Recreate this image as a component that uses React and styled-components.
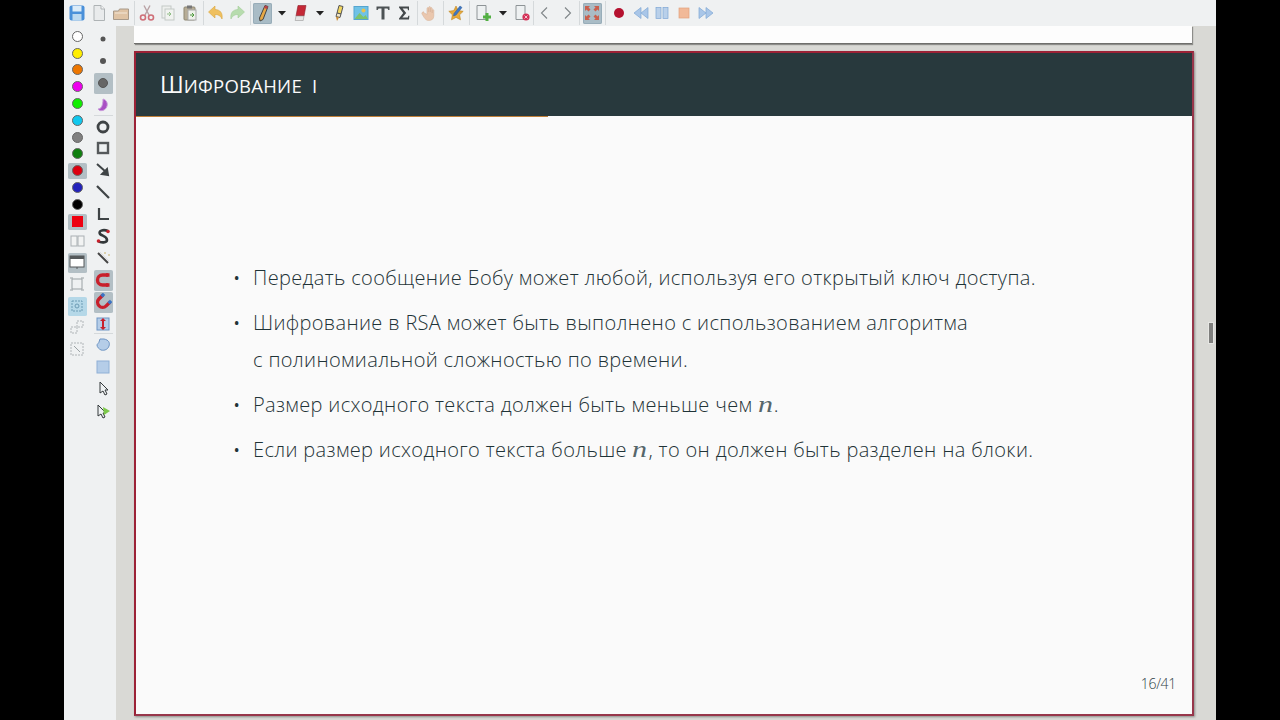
import React from 'react'
import styled, { createGlobalStyle } from 'styled-components'

const Global = createGlobalStyle`
  html, body { margin: 0; padding: 0; background: #000; }
  body { font-family: "Open Sans", "Noto Sans", sans-serif; }
`

const Screen = styled.div`
  width: 1280px;
  height: 720px;
  padding: 0 64px;
  box-sizing: border-box;
  background: #000;
  overflow: hidden;
`
const AppWindow = styled.div`
  height: 100%;
  display: flex;
  flex-direction: column;
  background: #eff1f2;
`
const Toolbar = styled.div`
  height: 26px;
  flex: none;
  display: flex;
  align-items: center;
  padding-left: 2.6px;
`
const ToolBtn = styled.div`
  width: ${p => p.$w || 21.7}px;
  height: 22px;
  flex: none;
  display: flex;
  align-items: center;
  justify-content: center;
  & > span {
    display: flex;
    align-items: center;
    justify-content: center;
    width: 19px;
    height: 21px;
    border-radius: 2px;
    background: ${p => (p.$on ? '#a9bcc6' : 'transparent')};
    box-shadow: ${p => (p.$on ? 'inset 0 0 0 1px #98adb9' : 'none')};
  }
`
const Sep = styled.div`
  width: ${p => p.$w || 4}px;
  height: 24px;
  flex: none;
  position: relative;
  &::after {
    content: '';
    position: absolute;
    left: 50%;
    top: 0;
    bottom: 0;
    width: 1px;
    background: #d5d9db;
  }
`
const Body = styled.div`
  flex: 1;
  min-height: 0;
  display: flex;
`
const Sidebar = styled.div`
  width: 52px;
  flex: none;
  display: flex;
`
const SideCol = styled.div`
  width: 26px;
  display: flex;
  flex-direction: column;
  align-items: center;
  padding-top: ${p => p.$top}px;
`
const Slot = styled.div`
  width: 19px;
  height: ${p => p.$h}px;
  flex: none;
  display: flex;
  align-items: center;
  justify-content: center;
  position: relative;
  box-sizing: border-box;
  padding: ${p => (p.$on ? '0.5px 0' : '0')};
  background-clip: content-box;
  border-radius: 2px;
  background-color: ${p => (p.$on === 'blue' ? '#b5d8e8' : p.$on ? '#b3bfc5' : 'transparent')};
  ${p => p.$rule && `
    &::after {
      content: '';
      position: absolute;
      left: 0;
      right: 0;
      bottom: 0;
      height: 1px;
      background: #d5d9db;
    }
  `}
`
const Dot = styled.span`
  width: 9px;
  height: 9px;
  border-radius: 50%;
  background: ${p => p.$c};
  border: 1px solid ${p => p.$b || '#666'};
`
const Workspace = styled.div`
  flex: 1;
  min-width: 0;
  background: #d9d9d5;
  display: flex;
  position: relative;
`
const Pages = styled.div`
  width: 1060px;
  margin-left: 18px;
  display: flex;
  flex-direction: column;
`
const PrevPage = styled.div`
  height: 17px;
  width: 1058px;
  flex: none;
  background: #fdfdfd;
  border-bottom: 1px solid #6f6f6c;
  box-shadow: 1px 1px 1px #8d8d8a;
`
const Slide = styled.div`
  margin-top: 7px;
  width: 1060px;
  height: 665px;
  flex: none;
  box-sizing: border-box;
  border: 2px solid #9c2236;
  border-right-color: #97364a;
  border-bottom-color: #97364a;
  box-shadow: 1px 1px 2px #8d8d8a;
  background: #fafafa;
  display: flex;
  flex-direction: column;
  color: #1f3337;
`
const SlideHead = styled.div`
  height: 63px;
  flex: none;
  background: #28393d;
  display: flex;
  align-items: baseline;
  padding: 18px 0 0 24px;
  box-sizing: border-box;
  color: #fafafa;
  font-size: 23px;
  line-height: 26px;
  font-weight: 400;
  white-space: pre;
`
const SmallCaps = styled.span`
  font-size: 18.5px;
  letter-spacing: 0.25px;
`
const Progress = styled.div`
  height: 1px;
  flex: none;
  background: #fafafa;
  & > div {
    height: 100%;
    background: #c07f38;
  }
`
const SlideBody = styled.div`
  flex: 1;
  display: flex;
  flex-direction: column;
  padding: 143px 0 0 98px;
  position: relative;
`
const Item = styled.div`
  display: flex;
  font-size: 20px;
  font-weight: 300;
  line-height: 36.5px;
  letter-spacing: 0.34px;
  margin-bottom: 8.7px;
  white-space: nowrap;
`
const Bullet = styled.span`
  width: 19px;
  flex: none;
  font-size: 14px;
  font-weight: 600;
`
const MathN = styled.i`
  display: inline-block;
  width: 16px;
  line-height: 0;
  font-family: "Liberation Serif", serif;
  font-size: 24px;
  font-weight: 400;
  letter-spacing: 0;
  color: #56666a;
  transform: scaleX(1.25);
  transform-origin: left center;
`
const PageNo = styled.div`
  position: absolute;
  right: 16px;
  bottom: 21px;
  font-size: 14px;
  font-weight: 300;
  color: #2f4246;
  letter-spacing: -0.3px;
`
const ScrollHandle = styled.div`
  position: absolute;
  left: 1093px;
  top: 297px;
  width: 4px;
  height: 20px;
  background: #7f7f7d;
  box-shadow: 0 0 0 1px #e6e6e3;
`

const Ico = ({ children, s = 18 }) => (
  <svg width={s} height={s} viewBox="0 0 18 18">{children}</svg>
)

const toolbarIcons = {
  save: <><rect x="1.500" y="1.500" width="15" height="15" rx="2" fill="#4a90d9" /><rect x="4.500" y="2" width="9" height="5.500" fill="#dcecf8" /><rect x="4.500" y="10" width="9" height="6.500" fill="#bcd9f0" /></>,
  file: <><path d="M4 1.500h7l3.500 3.500v11.500H4z" fill="#e9ebec" stroke="#aeb3b5" /><path d="M11 1.500V5h3.500" fill="#f6f7f7" stroke="#aeb3b5" /></>,
  open: <><path d="M1.500 7h5l1-2h9v10.500h-15z" fill="#dfc3a4" stroke="#a89a8a" /><path d="M3 9h12" stroke="#f3e7d8" /></>,
  cut: <><path d="M6 1.500l5 9.500M12 1.500L7 11" stroke="#b9a2a5" strokeWidth="1.400" /><circle cx="5" cy="13.500" r="2.500" fill="none" stroke="#cf6f78" strokeWidth="1.600" /><circle cx="13" cy="13.500" r="2.500" fill="none" stroke="#cf6f78" strokeWidth="1.600" /></>,
  copy: <><rect x="3" y="2" width="9" height="12" fill="#eef0ee" stroke="#c4c9c6" /><rect x="6" y="5" width="9" height="11" fill="#f1f3f0" stroke="#c4c9c6" /><path d="M8 10h4M10 8l2 2-2 2" stroke="#8fbd85" fill="none" /></>,
  paste: <><rect x="3" y="3" width="11" height="13" rx="1" fill="#b7ad96" stroke="#8f8873" /><rect x="6" y="1.500" width="5" height="3" fill="#777" /><rect x="7" y="6" width="8" height="10" fill="#eef0ea" stroke="#aaa" /><path d="M9 11h4M11 9l2 2-2 2" stroke="#4e9a3e" fill="none" /></>,
  undo: <path d="M8 2L1.500 8 8 14v-3.500c3 0 5.500 1 7 4.500 1-6-2-9.500-7-9.500z" fill="#efc05f" stroke="#d9a53d" strokeWidth=".6" />,
  redo: <path d="M10 2l6.500 6-6.500 6v-3.500c-3 0-5.500 1-7 4.500-1-6 2-9.500 7-9.500z" fill="#b7dcae" stroke="#a2cd98" strokeWidth=".6" />,
  pen: <><path d="M11 1.500l3 1L9 15.500l-3 1.500-.5-3z" fill="#e6a845" stroke="#444" /><path d="M11 1.500l3 1-1 2.500-3-1z" fill="#b8434b" /></>,
  eraser: <><path d="M6 1.500h8l-2 10.500H4z" fill="#c42836" stroke="#8f1e2a" strokeWidth=".6" /><path d="M4 12h8l-.8 4.500H3.200z" fill="#e5e5e5" stroke="#999" strokeWidth=".6" /></>,
  marker: <><path d="M9 1.500l4 1-2 7.500-4-1z" fill="#f3d75f" stroke="#555" /><path d="M7 9l4 1-1 3.500-4-1z" fill="#f1e6c6" stroke="#555" /><path d="M6 12.500l3 1L7 17z" fill="#c8892d" /></>,
  image: <><rect x="2" y="2.500" width="14" height="13" fill="#6fc2e6" stroke="#55a5cf" /><path d="M2.500 15l5-6 4 4 2-2 2.500 4z" fill="#7dc36d" /><circle cx="11.500" cy="6.500" r="2" fill="#e9c24f" /></>,
  text: <path d="M2.500 2.500h13v3.500h-1.200L13.500 4.500h-3v11h-3v-11h-3L3.700 6H2.500z" fill="#4c5254" />,
  sigma: <path d="M4 2.500h10v3.800h-1L12.600 4.500H7.600l3.600 4.500-3.800 4.500h5.400l.6-1.800h1L14 15.500H4v-1L8.200 9 4 3.500z" fill="#44494b" />,
  hand: <path d="M2.500 8.500l3.500 2V4.500c0-1.200 1.700-1.200 1.700 0v3.500-4.500c0-1.200 1.800-1.200 1.800 0v4.500-3.500c0-1.200 1.700-1.200 1.700 0v4.500-2.500c0-1.200 1.600-1.200 1.600 0v5.500c0 3-2.200 4.500-5 4.500-3.300 0-4.300-2.500-6.800-6.500-.6-1 .7-2.700 2-2z" fill="#eac7ae" stroke="#d9b69c" strokeWidth=".6" />,
  star: <><path d="M9 2l2.200 4.600 5 .7-3.600 3.500.9 5L9 13.400 4.500 15.800l.9-5L1.800 7.300l5-.7z" fill="#e8a93a" stroke="#b98422" strokeWidth=".6" /><path d="M13 2l2 1.500-6 7.500-2.500 1 .5-2.500z" fill="#3f78c4" stroke="#2c5996" strokeWidth=".5" /></>,
  addPage: <><path d="M3 1.500h9v14H3z" fill="#eef1f2" stroke="#8e9497" /><rect x="9" y="11.500" width="8" height="3" fill="#52b043" /><rect x="11.500" y="9" width="3" height="8" fill="#52b043" /></>,
  delPage: <><path d="M3 1.500h9v14H3z" fill="#eef1f2" stroke="#8e9497" /><circle cx="13" cy="13" r="3.600" fill="#d32f55" /><path d="M11.500 11.500l3 3M14.500 11.500l-3 3" stroke="#f3c2cf" /></>,
  prev: <path d="M11 3.500L5.500 9l5.500 5.500" fill="none" stroke="#7f8588" strokeWidth="1.100" />,
  next: <path d="M7 3.500L12.500 9 7 14.500" fill="none" stroke="#7f8588" strokeWidth="1.100" />,
  full: <g fill="#c95f4e"><path d="M2 2h5l-1.500 1.500 2 2-2 2-2-2L2 7z" /><path d="M16 2h-5l1.500 1.500-2 2 2 2 2-2L16 7z" /><path d="M2 16h5l-1.500-1.500 2-2-2-2-2 2L2 11z" /><path d="M16 16h-5l1.500-1.500-2-2 2-2 2 2L16 11z" /></g>,
  record: <circle cx="10" cy="9" r="5" fill="#b5112f" />,
  rewind: <g fill="#a9c6e8" stroke="#7ea6d4" strokeWidth=".7"><path d="M10 3.500v11L3 9z" /><path d="M17 3.500v11L10 9z" /></g>,
  pause: <g fill="#b9d0ea" stroke="#7ea6d4" strokeWidth=".7"><rect x="4" y="3.500" width="5" height="11" /><rect x="11" y="3.500" width="5" height="11" /></g>,
  stop: <rect x="5" y="4" width="10" height="10" fill="#f1b998" stroke="#e3a27d" strokeWidth=".7" />,
  forward: <g fill="#a9c6e8" stroke="#7ea6d4" strokeWidth=".7"><path d="M3 3.500v11L10 9z" /><path d="M10 3.500v11L17 9z" /></g>,
}

const Caret = () => <svg width="8" height="5" viewBox="0 0 8 5"><path d="M0 0h8L4 4.500z" fill="#222" /></svg>

const toolbar = [
  ['save'], ['file'], ['open'], 'sep',
  ['cut'], ['copy'], ['paste'], 'sep',
  ['undo'], ['redo'], 'sep',
  ['pen', { on: true }], 'caret', ['eraser'], 'caret',
  ['marker'], ['image'], ['text'], ['sigma'], 'sep',
  ['hand'], 'sep', ['star'], 'sep',
  ['addPage', { w: 24 }], 'caret', ['delPage', { w: 21 }], 'sep2',
  ['prev'], ['next'], 'sep',
  ['full', { on: true }], 'sep',
  ['record'], ['rewind'], ['pause'], ['stop'], ['forward'],
]

const colours = [
  ['#ffffff'], ['#ffee00'], ['#ee7700'], ['#ee00ee'], ['#11ee00'], ['#11c8ee'], ['#808080'], ['#108010'],
  ['#dd0010', true], ['#2222bb'], ['#000000'],
]

const mag = (rot, tip) => (
  <Ico>
    <g transform={`rotate(${rot} 9 9)`}>
      <path d="M4 4v5.500a5 5 0 0 0 10 0V4" fill="none" stroke="#c8202c" strokeWidth="3.400" />
      <path d="M4 2.500V6M14 2.500V6" stroke={tip} strokeWidth="3.400" />
    </g>
  </Ico>
)

const tools = [
  [<svg width="6" height="6"><circle cx="3" cy="3" r="2.500" fill="#555" /></svg>],
  [<svg width="8" height="8"><circle cx="4" cy="4" r="3" fill="#555" /></svg>],
  [<svg width="12" height="12"><circle cx="6" cy="6" r="4.500" fill="#666" stroke="#555" /></svg>, true],
  [<Ico><path d="M9 3c5 1 6 8 1 11-2 1-5 1-6-1 3 0 5-3 5-10z" fill="#a94fc4" stroke="#c99adb" /></Ico>, false, true],
  [<Ico><circle cx="9" cy="9" r="5" fill="none" stroke="#3f4446" strokeWidth="2.800" /></Ico>],
  [<Ico><rect x="4" y="4" width="10" height="10" fill="#eef1f2" stroke="#55595b" strokeWidth="2.400" /></Ico>],
  [<Ico><path d="M3 3l9 8M14 14l-6-1 5-5z" stroke="#3f4446" strokeWidth="2" fill="#3f4446" /></Ico>],
  [<Ico><path d="M3 3l12 12" stroke="#3f4446" strokeWidth="2.200" /></Ico>],
  [<Ico><path d="M5 3v11h10" fill="none" stroke="#3f4446" strokeWidth="2.200" /></Ico>],
  [<Ico><path d="M14 4C9 2 4 4 6 7c2 2 7 2 7 6 0 3-6 3-9 1" fill="none" stroke="#33383a" strokeWidth="2.600" /><circle cx="14" cy="4.500" r="1.800" fill="#c8202c" /><circle cx="4.500" cy="14" r="1.800" fill="#c8202c" /></Ico>],
  [<Ico><path d="M4 4l10 10" stroke="#444" strokeWidth="2" /><path d="M6 3l9 9" stroke="#ddd" /><path d="M11 3v2M14 6h2" stroke="#c9b26a" /></Ico>],
  [mag(90, '#c8202c'), true],
  [mag(45, '#3a74c4'), true],
  [<Ico><rect x="3" y="3" width="12" height="12" fill="#b5cde8" stroke="#6e95c4" /><path d="M9 3l3 3h-2v6h2l-3 3-3-3h2V6H6z" fill="#c8202c" /></Ico>, false, true],
  [<Ico><path d="M6 3h4c5 1 6 4 5 7s-4 5-8 4c-2-1-4-3-4-5 0-1 2-2 2-3z" fill="#b5cde8" stroke="#6e95c4" /></Ico>],
  [<Ico><rect x="3" y="3" width="12" height="12" fill="#b5cde8" stroke="#8fb0d6" /></Ico>],
  [<Ico><path d="M6 2v11l3-2 2 4 2-1-2-4h3z" fill="#eef1f2" stroke="#33383a" /></Ico>],
  [<Ico><path d="M4 3v11l3-2 2 4 2-1-2-4h3z" fill="#eef1f2" stroke="#33383a" /><path d="M9 5l7 4-6 4z" fill="#7cc84a" /></Ico>],
]

const panes = [
  [22, false, <Ico><rect x="3" y="4" width="6" height="10" fill="#f2f3f3" stroke="#aab0b3" /><rect x="10" y="4" width="6" height="10" fill="#f2f3f3" stroke="#aab0b3" /></Ico>],
  [21, true, <Ico><rect x="2" y="3" width="14" height="11" fill="#fff" stroke="#55595b" /><rect x="2" y="3" width="14" height="3" fill="#55595b" /><path d="M9 14v2" stroke="#55595b" /></Ico>],
  [23, false, <Ico><rect x="4" y="4" width="10" height="10" fill="none" stroke="#9aa1a4" /><path d="M2 3h3M13 3h3M2 15h3M13 15h3" stroke="#9aa1a4" /></Ico>],
  [20, 'blue', <Ico><rect x="4" y="4" width="10" height="10" fill="none" stroke="#6d9cb5" strokeDasharray="2 1" /><circle cx="9" cy="9" r="2" fill="none" stroke="#6d9cb5" /></Ico>],
  [22, false, <Ico><rect x="3" y="9" width="6" height="6" fill="none" stroke="#b0b5b8" strokeDasharray="2 1" /><rect x="9" y="3" width="6" height="6" fill="none" stroke="#b0b5b8" strokeDasharray="2 1" /></Ico>],
  [22, false, <Ico><rect x="3" y="3" width="12" height="12" fill="none" stroke="#b0b5b8" strokeDasharray="2 1" /><path d="M6 6l6 6" stroke="#9aa1a4" /></Ico>],
]

function App() {
  return (
    <>
      <Global />
      <Screen>
        <AppWindow>
          <Toolbar>
            {toolbar.map((t, i) => {
              if (t === 'sep') return <Sep key={i} />
              if (t === 'sep2') return <Sep key={i} $w={2} />
              if (t === 'caret') return <ToolBtn key={i} $w={16.5}><span><Caret /></span></ToolBtn>
              const [name, opt = {}] = t
              return (
                <ToolBtn key={i} $w={opt.w} $on={opt.on}>
                  <span><Ico>{toolbarIcons[name]}</Ico></span>
                </ToolBtn>
              )
            })}
          </Toolbar>
          <Body>
            <Sidebar>
              <SideCol $top={2}>
                {colours.map(([c, on], i) => (
                  <Slot key={i} $h={16.8} $on={on}><Dot $c={c} /></Slot>
                ))}
                <Slot $h={16.8} $on><svg width="11" height="11"><rect width="11" height="11" fill="#ee0010" /></svg></Slot>
                {panes.map(([h, on, icon], i) => (
                  <Slot key={i} $h={h} $on={on}>{icon}</Slot>
                ))}
              </SideCol>
              <SideCol $top={2}>
                {tools.map(([icon, on, rule], i) => (
                  <Slot key={i} $h={21.9} $on={on} $rule={rule}>{icon}</Slot>
                ))}
              </SideCol>
            </Sidebar>
            <Workspace>
              <Pages>
                <PrevPage />
                <Slide>
                  <SlideHead>Ш<SmallCaps>ИФРОВАНИЕ  I</SmallCaps></SlideHead>
                  <Progress><div style={{ width: `${(16 / 41) * 100}%` }} /></Progress>
                  <SlideBody>
                    <Item><Bullet>•</Bullet><span>Передать сообщение Бобу может любой, используя его открытый ключ доступа.</span></Item>
                    <Item><Bullet>•</Bullet><span>Шифрование в RSA может быть выполнено с использованием алгоритма<br />с полиномиальной сложностью по времени.</span></Item>
                    <Item><Bullet>•</Bullet><span>Размер исходного текста должен быть меньше чем <MathN>n</MathN>.</span></Item>
                    <Item><Bullet>•</Bullet><span>Если размер исходного текста больше <MathN>n</MathN>, то он должен быть разделен на блоки.</span></Item>
                    <PageNo>16/41</PageNo>
                  </SlideBody>
                </Slide>
              </Pages>
              <ScrollHandle />
            </Workspace>
          </Body>
        </AppWindow>
      </Screen>
    </>
  )
}

export default App
